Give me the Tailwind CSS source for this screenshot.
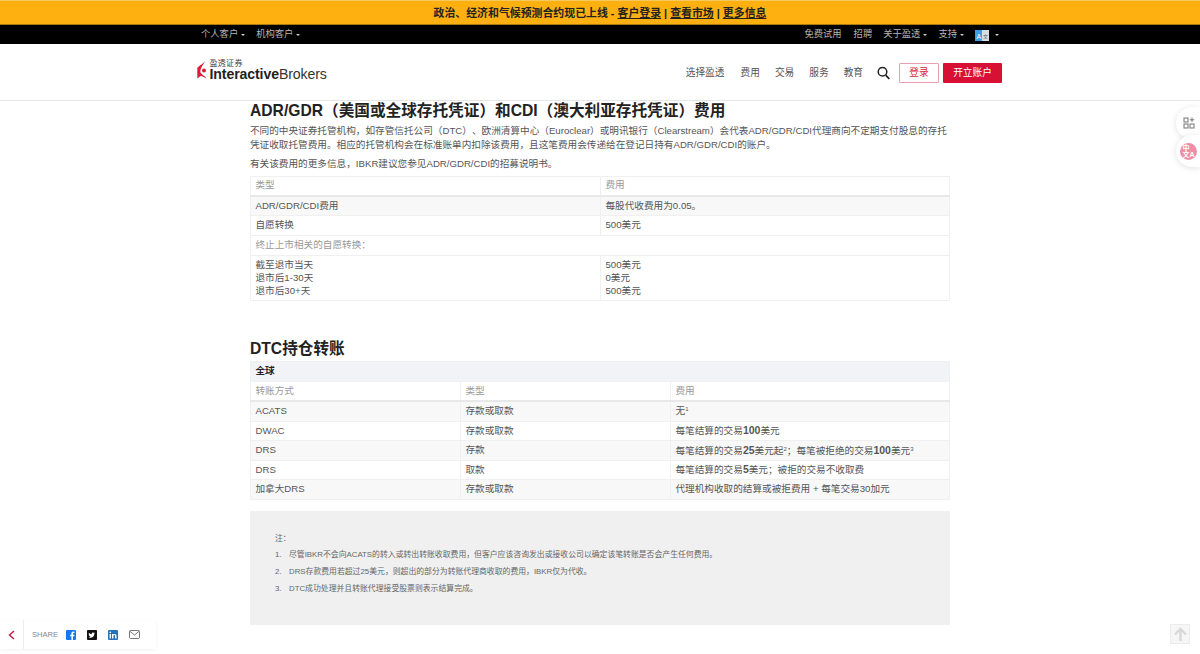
<!DOCTYPE html>
<html lang="zh-CN">
<head>
<meta charset="utf-8">
<script src="https://cdn.jsdelivr.net/npm/@tailwindcss/browser@4"></script>
</head>
<body class="bg-white h-[654px] w-[1200px] overflow-hidden relative font-['Liberation_Sans','Noto_Sans_CJK_SC',sans-serif] text-[#555] [text-spacing-trim:space-all]">
<div class="h-[25px] pt-[1px] bg-[#fdb00f] border-t border-[#f5c860] border-b border-b-[#a87a10] flex items-center justify-center text-[10.9px] font-bold text-[#222]">
  <span>政治、经济和气候预测合约现已上线 - <u>客户登录</u> | <u>查看市场</u> | <u>更多信息</u></span>
</div>
<div class="h-[19px] pt-[1px] bg-black flex items-center justify-between pl-[201px] pr-[201px] text-[9.3px] text-[#b5b5b5]">
  <div class="flex items-center gap-[11px]">
    <span class="flex items-center gap-[3px]">个人客户<i class="w-0 h-0 border-x-[2px] border-x-transparent border-t-[2px] border-t-[#ccc]"></i></span>
    <span class="flex items-center gap-[3px]">机构客户<i class="w-0 h-0 border-x-[2px] border-x-transparent border-t-[2px] border-t-[#ccc]"></i></span>
  </div>
  <div class="flex items-center gap-[12px]">
    <span>免费试用</span><span>招聘</span>
    <span class="flex items-center gap-[3px] -ml-[1px]">关于盈透<i class="w-0 h-0 border-x-[2px] border-x-transparent border-t-[2px] border-t-[#ccc]"></i></span>
    <span class="flex items-center gap-[3px] -ml-[1px]">支持<i class="w-0 h-0 border-x-[2px] border-x-transparent border-t-[2px] border-t-[#ccc]"></i></span>
    <span class="flex items-center gap-[6px] -ml-[1px]">
      <svg width="14" height="11" viewBox="0 0 14 11"><rect width="8" height="11" fill="#3d9be9"/><rect x="7" width="7" height="11" fill="#d8dde2"/><text x="1.5" y="8.5" font-size="7" fill="#fff" font-family="Liberation Sans">A</text><text x="8" y="8" font-size="5" fill="#667">文</text></svg>
      <i class="w-0 h-0 border-x-[2px] border-x-transparent border-t-[2px] border-t-[#ccc]"></i>
    </span>
  </div>
</div>
<header class="h-[56.5px] border-b border-[#e6e6e6] flex items-center justify-between pl-[196.5px] pr-[198px]">
  <div class="flex items-center gap-[3px] -mt-[4px]">
    <svg width="10" height="19" viewBox="0 0 10 19"><path d="M8.5 .5C7 3.5 2 5.5 .3 8V18.5L4 15.8 9.7 18.5C7.5 15.5 4.5 14.5 3.4 12.5 2.8 9 6 5 8.5 .5Z" fill="#d81f36"/><circle cx="7" cy="10.6" r="2" fill="#d81f36"/></svg>
    <div class="flex flex-col leading-none">
      <span class="text-[8px] text-[#444] tracking-[0.3px] leading-[9px]">盈透证券</span>
      <span class="text-[14.1px] text-[#333] leading-[13px] tracking-[-0.1px]"><b class="font-bold text-[#222]">Interactive</b>Brokers</span>
    </div>
  </div>
  <nav class="flex items-center text-[9.7px] text-[#555] mt-[3px]">
    <span class="mr-[16px]">选择盈透</span><span class="mr-[15px]">费用</span><span class="mr-[15px]">交易</span><span class="mr-[15px]">服务</span><span class="mr-[14px]">教育</span>
    <svg class="mr-[9px]" width="13" height="14" viewBox="0 0 13 14" fill="none" stroke="#222" stroke-width="1.5"><circle cx="5.5" cy="5.8" r="4.3"/><path d="M8.7 9.2 L12.3 13" stroke-width="1.8"/></svg>
    <span class="w-[40px] h-[20px] border border-[#e8a0ac] text-[#d81f36] flex items-center justify-center mr-[4px] rounded-[1px]">登录</span>
    <span class="w-[59px] h-[20px] bg-[#d81033] text-white flex items-center justify-center rounded-[1px]">开立账户</span>
  </nav>
</header>
<main class="w-[700px] ml-[250px]">
  <h2 class="text-[15.65px] font-bold text-[#222] leading-[20px]">ADR/GDR（美国或全球存托凭证）和CDI（澳大利亚存托凭证）费用</h2>
  <p class="text-[9.65px] leading-[14px] mt-[3px] text-[#555]">不同的中央证券托管机构，如存管信托公司（DTC）、欧洲清算中心（Euroclear）或明讯银行（Clearstream）会代表ADR/GDR/CDI代理商向不定期支付股息的存托凭证收取托管费用。相应的托管机构会在标准账单内扣除该费用，且这笔费用会传递给在登记日持有ADR/GDR/CDI的账户。</p>
  <p class="text-[9.65px] leading-[14px] mt-[5px] text-[#555]">有关该费用的更多信息，IBKR建议您参见ADR/GDR/CDI的招募说明书。</p>

  <table class="mt-[5px] w-[699px] table-fixed border-collapse text-[9.65px] leading-[12.5px] text-[#555]">
    <colgroup><col class="w-[350px]"><col class="w-[349px]"></colgroup>
    <tr class="h-[19.5px] text-[#999]"><td class="border border-[#f0f0f0] border-b-2 border-b-[#e8e8e8] px-[4.5px]">类型</td><td class="border border-[#f0f0f0] border-b-2 border-b-[#e8e8e8] px-[4.5px]">费用</td></tr>
    <tr class="h-[20px] bg-[#f8f8f8]"><td class="border border-[#f0f0f0] px-[4.5px]">ADR/GDR/CDI费用</td><td class="border border-[#f0f0f0] px-[4.5px]">每股代收费用为0.05。</td></tr>
    <tr class="h-[19.5px]"><td class="border border-[#f0f0f0] px-[4.5px]">自愿转换</td><td class="border border-[#f0f0f0] px-[4.5px]">500美元</td></tr>
    <tr class="h-[20px] text-[#999]"><td colspan="2" class="border border-[#f0f0f0] px-[4.5px]">终止上市相关的自愿转换：</td></tr>
    <tr class="h-[45px]"><td class="border border-[#f0f0f0] px-[4.5px] py-0 leading-[13px]">截至退市当天<br>退市后1-30天<br>退市后30+天</td><td class="border border-[#f0f0f0] px-[4.5px] leading-[13px]">500美元<br>0美元<br>500美元</td></tr>
  </table>

  <h2 class="mt-[38px] text-[15.65px] font-bold text-[#222] leading-[20px]">DTC持仓转账</h2>
  <table class="mt-[2px] w-[699px] table-fixed border-collapse text-[9.65px] leading-[12.5px] text-[#555]">
    <colgroup><col class="w-[210px]"><col class="w-[210px]"><col class="w-[279px]"></colgroup>
    <tr class="h-[20px] bg-[#f2f3f7]"><td colspan="3" class="border border-[#f0f0f0] px-[4.5px] font-bold text-[#222]">全球</td></tr>
    <tr class="h-[20px] text-[#999]"><td class="border border-[#f0f0f0] border-b-2 border-b-[#e8e8e8] px-[4.5px]">转账方式</td><td class="border border-[#f0f0f0] border-b-2 border-b-[#e8e8e8] px-[4.5px]">类型</td><td class="border border-[#f0f0f0] border-b-2 border-b-[#e8e8e8] px-[4.5px]">费用</td></tr>
    <tr class="h-[20px] bg-[#f8f8f8]"><td class="border border-[#f0f0f0] px-[4.5px]">ACATS</td><td class="border border-[#f0f0f0] px-[4.5px]">存款或取款</td><td class="border border-[#f0f0f0] px-[4.5px]">无<sup class="text-[6px]">1</sup></td></tr>
    <tr class="h-[19.5px]"><td class="border border-[#f0f0f0] px-[4.5px]">DWAC</td><td class="border border-[#f0f0f0] px-[4.5px]">存款或取款</td><td class="border border-[#f0f0f0] px-[4.5px]">每笔结算的交易<b class="text-[10.5px]">100</b>美元</td></tr>
    <tr class="h-[19.5px] bg-[#f8f8f8]"><td class="border border-[#f0f0f0] px-[4.5px]">DRS</td><td class="border border-[#f0f0f0] px-[4.5px]">存款</td><td class="border border-[#f0f0f0] px-[4.5px]">每笔结算的交易<b class="text-[10.5px]">25</b>美元起<sup class="text-[6px]">2</sup>；每笔被拒绝的交易<b class="text-[10.5px]">100</b>美元<sup class="text-[6px]">3</sup></td></tr>
    <tr class="h-[19.5px]"><td class="border border-[#f0f0f0] px-[4.5px]">DRS</td><td class="border border-[#f0f0f0] px-[4.5px]">取款</td><td class="border border-[#f0f0f0] px-[4.5px]">每笔结算的交易<b class="text-[10.5px]">5</b>美元；被拒的交易不收取费</td></tr>
    <tr class="h-[19.5px] bg-[#f8f8f8]"><td class="border border-[#f0f0f0] px-[4.5px]">加拿大DRS</td><td class="border border-[#f0f0f0] px-[4.5px]">存款或取款</td><td class="border border-[#f0f0f0] px-[4.5px]">代理机构收取的结算或被拒费用 + 每笔交易30加元</td></tr>
  </table>

  <section class="mt-[11px] h-[114px] bg-[#f0f0f0] pl-[25px] pt-[22px] text-[7.85px] text-[#666]">
    <p class="leading-[12px]">注：</p>
    <ol class="mt-[4px] flex flex-col gap-[5px]">
      <li class="flex leading-[12px]"><span class="w-[14px]">1.</span>尽管IBKR不会向ACATS的转入或转出转账收取费用，但客户应该咨询发出或接收公司以确定该笔转账是否会产生任何费用。</li>
      <li class="flex leading-[12px]"><span class="w-[14px]">2.</span>DRS存款费用若超过25美元，则超出的部分为转账代理商收取的费用，IBKR仅为代收。</li>
      <li class="flex leading-[12px]"><span class="w-[14px]">3.</span>DTC成功处理并且转账代理接受股票则表示结算完成。</li>
    </ol>
  </section>
</main>

<div class="absolute right-0 top-[107px] w-[24px] h-[32px] bg-white rounded-l-[16px] shadow-[0_1px_6px_rgba(0,0,0,0.12)] flex items-center justify-start pl-[7px]">
  <svg width="12" height="12" viewBox="0 0 12 12" fill="none" stroke="#777" stroke-width="1"><rect x="1" y="1" width="4" height="4"/><rect x="1" y="7" width="4" height="4"/><rect x="7" y="7" width="4" height="4"/><path d="M9 .5V5M6.8 2.8H11.2"/></svg>
</div>
<div class="absolute right-0 top-[135px] w-[24px] h-[32px] bg-white rounded-l-[16px] shadow-[0_1px_6px_rgba(0,0,0,0.12)] flex items-center pl-[4px]">
  <span class="w-[17px] h-[17px] rounded-full bg-[#ee8fa8] text-white text-[7px] leading-[7px] flex flex-wrap items-center justify-center font-bold">中<br>文A</span>
</div>

<div class="absolute left-0 top-[620px] w-[156px] h-[29px] bg-white shadow-[0_1px_4px_rgba(0,0,0,0.06)] flex items-center">
  <div class="w-[24px] h-full border-r border-[#eee] flex items-center justify-center">
    <svg width="7" height="10" viewBox="0 0 7 10" fill="none" stroke="#c9203f" stroke-width="1.5"><path d="M6 1 L1.5 5 L6 9"/></svg>
  </div>
  <span class="ml-[8px] text-[7.6px] text-[#888]">SHARE</span>
  <svg class="ml-[8px]" width="10" height="10" viewBox="0 0 10 10"><rect width="10" height="10" rx="1" fill="#1877f2"/><path d="M7 10V6.2H8.2L8.4 4.7H7V3.8C7 3.3 7.2 3 7.8 3H8.5V1.7C8 1.6 7.6 1.6 7.2 1.6 6 1.6 5.4 2.3 5.4 3.6V4.7H4.1V6.2H5.4V10Z" fill="#fff"/></svg>
  <svg class="ml-[11px]" width="10" height="10" viewBox="0 0 10 10"><rect width="10" height="10" rx="1" fill="#111"/><path d="M8.2 3.1c-.3.1-.5.2-.8.2.3-.2.5-.4.6-.7-.3.2-.6.3-.9.3a1.4 1.4 0 0 0-2.4 1.3C3.5 4.2 2.5 3.6 1.9 2.8c-.3.6-.2 1.3.4 1.8-.2 0-.4-.1-.6-.2 0 .7.4 1.2 1.1 1.4-.2 0-.4.1-.6 0 .2.5.7.9 1.3 1-.6.4-1.3.6-2 .5 1.9 1.2 5.8.6 5.9-3.7.3-.1.6-.3.8-.5Z" fill="#fff"/></svg>
  <svg class="ml-[11px]" width="10" height="10" viewBox="0 0 10 10"><rect width="10" height="10" rx="1" fill="#2872b8"/><path d="M1.6 4H3V8.4H1.6ZM2.3 1.6a.8.8 0 1 1 0 1.6.8.8 0 0 1 0-1.6ZM4 4H5.3V4.6C5.6 4.1 6.1 3.9 6.7 3.9 7.9 3.9 8.5 4.6 8.5 5.9V8.4H7.1V6.2C7.1 5.5 6.9 5.1 6.3 5.1 5.7 5.1 5.4 5.5 5.4 6.2V8.4H4Z" fill="#fff"/></svg>
  <svg class="ml-[11px]" width="11" height="9" viewBox="0 0 11 9" fill="none" stroke="#777" stroke-width="1"><rect x=".5" y=".5" width="10" height="8" rx="1"/><path d="M.8 1.2 L5.5 5 L10.2 1.2"/></svg>
</div>
<div class="absolute left-[1170px] top-[624px] w-[20px] h-[20px] bg-[#f6f6f6] border border-[#ececec] flex items-center justify-center">
  <svg width="15" height="15" viewBox="0 0 15 15" fill="none" stroke="#d8d8d8" stroke-width="2.4"><path d="M7.5 14V2M2 7.5 L7.5 2 L13 7.5"/></svg>
</div>
</body>
</html>
